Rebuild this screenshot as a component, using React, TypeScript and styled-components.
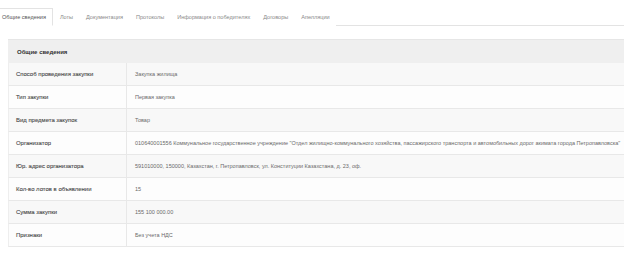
import React from "react";
import styled, { createGlobalStyle } from "styled-components";

const Global = createGlobalStyle`
  html, body { margin: 0; padding: 0; background: #fff; }
  body { font-family: "Liberation Sans", Arial, sans-serif; font-size: 6px; color: #555; overflow: hidden; }
`;

const Page = styled.div`
  width: 624px;
  height: 257px;
  overflow: hidden;
`;

const Tabs = styled.ul`
  display: flex;
  list-style: none;
  margin: 8px 0 0 0;
  padding: 0;
  border-bottom: 1px solid #e3e3e3;
  height: 17px;
`;

const Tab = styled.li<{ $active?: boolean }>`
  display: flex;
  align-items: center;
  padding: 0 5.5px;
  box-sizing: border-box;
  font-size: 5.55px;
  color: ${(p) => (p.$active ? "#555" : "#8a8a8a")};
  background: #fff;
  border: 1px solid ${(p) => (p.$active ? "#e3e3e3" : "transparent")};
  border-bottom-color: ${(p) => (p.$active ? "#fff" : "transparent")};
  margin-bottom: -1px;
  height: 18px;
  white-space: nowrap;
  &:first-child { margin-left: -6px; padding-left: 7px; padding-right: 6.5px; }
`;

const Panel = styled.section`
  margin: 13px 0 0 8px;
  width: 640px;
`;

const PanelHeader = styled.div`
  height: 24px;
  background: #efefef;
  border-top: 1px solid #e6e6e6;
  box-sizing: border-box;
  display: flex;
  align-items: center;
  padding-left: 9px;
  font-weight: bold;
  color: #333;
`;

const Row = styled.div<{ $striped: boolean }>`
  display: grid;
  grid-template-columns: 118px 1fr;
  height: 23px;
  box-sizing: border-box;
  background: ${(p) => (p.$striped ? "#f8f8f8" : "#fdfdfd")};
  border-bottom: 1px solid #e8e8e8;
  border-left: 1px solid #eee;
`;

const Label = styled.div`
  display: flex;
  align-items: center;
  padding-left: 7px;
  border-right: 1px solid #e8e8e8;
  font-size: 5.95px;
  color: #4a4a4a;
  -webkit-text-stroke: 0.1px #4a4a4a;
  white-space: nowrap;
`;

const Value = styled.div`
  display: flex;
  align-items: center;
  padding-left: 8px;
  font-size: 5.5px;
  color: #6a6a6a;
  white-space: nowrap;
`;

const tabs = [
  "Общие сведения",
  "Лоты",
  "Документация",
  "Протоколы",
  "Информация о победителях",
  "Договоры",
  "Апелляции",
];

const rows: [string, string][] = [
  ["Способ проведения закупки", "Закупка жилища"],
  ["Тип закупки", "Первая закупка"],
  ["Вид предмета закупок", "Товар"],
  [
    "Организатор",
    '010640001556 Коммунальное государственное учреждение "Отдел жилищно-коммунального хозяйства, пассажирского транспорта и автомобильных дорог акимата города Петропавловска"',
  ],
  [
    "Юр. адрес организатора",
    "591010000, 150000, Казахстан, г. Петропавловск, ул. Конституции Казахстана, д. 23, оф.",
  ],
  ["Кол-во лотов в объявлении", "15"],
  ["Сумма закупки", "155 100 000.00"],
  ["Признаки", "Без учета НДС"],
];

export default function App() {
  return (
    <Page>
      <Global />
      <Tabs>
        {tabs.map((t, i) => (
          <Tab key={t} $active={i === 0}>
            {t}
          </Tab>
        ))}
      </Tabs>
      <Panel>
        <PanelHeader>Общие сведения</PanelHeader>
        {rows.map(([l, v], i) => (
          <Row key={l} $striped={i % 2 === 0}>
            <Label>{l}</Label>
            <Value>{v}</Value>
          </Row>
        ))}
      </Panel>
    </Page>
  );
}
